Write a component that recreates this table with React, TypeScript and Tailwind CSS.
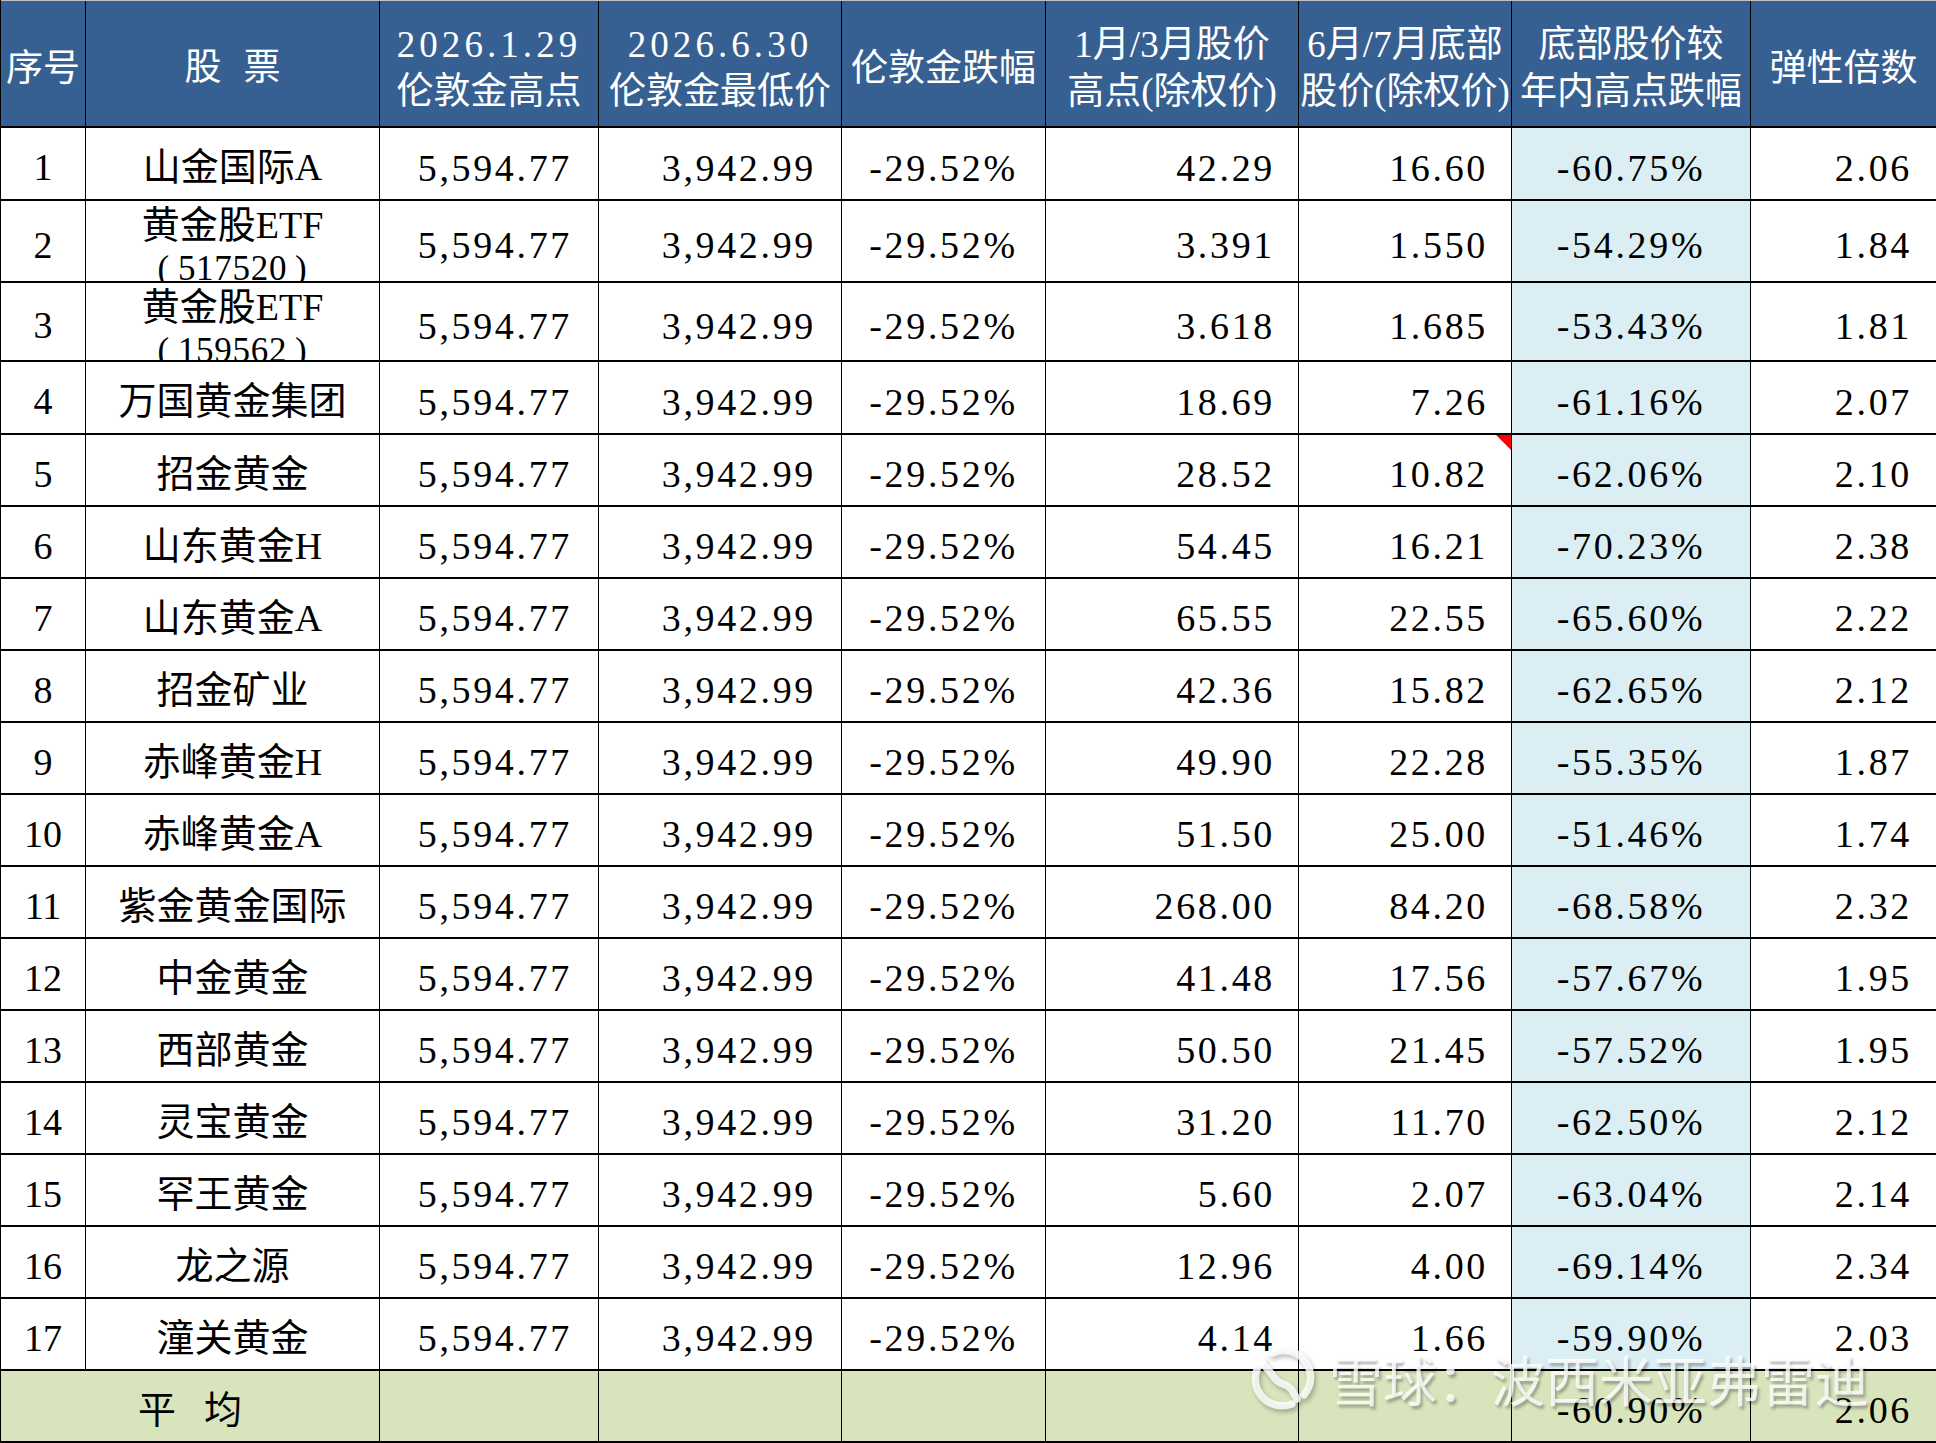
const ROW = "grid grid-cols-[85px_294px_219px_243px_204px_253px_213px_239px_186px] border-b-2 border-black";
const FONT = "font-['Liberation_Serif','Noto_Sans_CJK_SC',serif]";

type Stock = {
  no: number;
  name: string;
  code?: string;
  high: string;
  low: string;
  drop: string;
  ratio: string;
  h: string;
  flag?: boolean;
};

const stocks: Stock[] = [
  { no: 1, name: "山金国际A", high: "42.29", low: "16.60", drop: "-60.75%", ratio: "2.06", h: "h-[73px]" },
  { no: 2, name: "黄金股ETF", code: "517520", high: "3.391", low: "1.550", drop: "-54.29%", ratio: "1.84", h: "h-[82px]" },
  { no: 3, name: "黄金股ETF", code: "159562", high: "3.618", low: "1.685", drop: "-53.43%", ratio: "1.81", h: "h-[79px]" },
  { no: 4, name: "万国黄金集团", high: "18.69", low: "7.26", drop: "-61.16%", ratio: "2.07", h: "h-[73px]" },
  { no: 5, name: "招金黄金", high: "28.52", low: "10.82", drop: "-62.06%", ratio: "2.10", h: "h-[72px]", flag: true },
  { no: 6, name: "山东黄金H", high: "54.45", low: "16.21", drop: "-70.23%", ratio: "2.38", h: "h-[72px]" },
  { no: 7, name: "山东黄金A", high: "65.55", low: "22.55", drop: "-65.60%", ratio: "2.22", h: "h-[72px]" },
  { no: 8, name: "招金矿业", high: "42.36", low: "15.82", drop: "-62.65%", ratio: "2.12", h: "h-[72px]" },
  { no: 9, name: "赤峰黄金H", high: "49.90", low: "22.28", drop: "-55.35%", ratio: "1.87", h: "h-[72px]" },
  { no: 10, name: "赤峰黄金A", high: "51.50", low: "25.00", drop: "-51.46%", ratio: "1.74", h: "h-[72px]" },
  { no: 11, name: "紫金黄金国际", high: "268.00", low: "84.20", drop: "-68.58%", ratio: "2.32", h: "h-[72px]" },
  { no: 12, name: "中金黄金", high: "41.48", low: "17.56", drop: "-57.67%", ratio: "1.95", h: "h-[72px]" },
  { no: 13, name: "西部黄金", high: "50.50", low: "21.45", drop: "-57.52%", ratio: "1.95", h: "h-[72px]" },
  { no: 14, name: "灵宝黄金", high: "31.20", low: "11.70", drop: "-62.50%", ratio: "2.12", h: "h-[72px]" },
  { no: 15, name: "罕王黄金", high: "5.60", low: "2.07", drop: "-63.04%", ratio: "2.14", h: "h-[72px]" },
  { no: 16, name: "龙之源", high: "12.96", low: "4.00", drop: "-69.14%", ratio: "2.34", h: "h-[72px]" },
  { no: 17, name: "潼关黄金", high: "4.14", low: "1.66", drop: "-59.90%", ratio: "2.03", h: "h-[72px]" },
];

// header cell: an optional date line (spaced digits) above the label
const HeadCell = ({ date, label }: { date?: string; label: string }) => (
  <div className="flex flex-col items-center justify-center border-r border-black pt-[9px] text-[37px] leading-[47px] text-white whitespace-nowrap">
    {date && <span className="tracking-[0.11em]">{date}</span>}
    <span>{label}</span>
  </div>
);

const Logo = () => (
  <svg width="70" height="66" viewBox="0 0 70 66" className="drop-shadow-[2px_3px_2px_rgba(0,0,0,0.3)]">
    <g fill="none" stroke="rgba(255,255,255,0.82)" strokeLinecap="round" strokeWidth="7.5">
      <path d="M15 15 A27 27 0 0 0 45 58" />
      <path d="M25 7 A27 27 0 0 1 57 49" />
      <path d="M17 19 C26 28 28 36 36 38 C44 40 46 46 50 53" />
    </g>
  </svg>
);

export default function App() {
  return (
    <div className={`relative w-[1936px] h-[1443px] overflow-hidden bg-white text-black ${FONT}`}>
      <div className="border-l border-black">
        {/* header */}
        <div className={`${ROW} h-[128px] bg-[#376092] border-t border-t-[#bfbfbf]`}>
          <HeadCell label="序号" />
          <div className="flex items-center justify-center gap-[22px] border-r border-black pt-[9px] text-[37px] text-white">
            <span>股</span>
            <span>票</span>
          </div>
          <HeadCell date="2026.1.29" label="伦敦金高点" />
          <HeadCell date="2026.6.30" label="伦敦金最低价" />
          <HeadCell label="伦敦金跌幅" />
          <div className="flex flex-col items-center justify-center border-r border-black pt-[9px] text-[37px] leading-[47px] text-white whitespace-nowrap">
            <span>1月/3月股价</span>
            <span>高点(除权价)</span>
          </div>
          <div className="flex flex-col items-center justify-center border-r border-black pt-[9px] text-[37px] leading-[47px] text-white whitespace-nowrap">
            <span>6月/7月底部</span>
            <span>股价(除权价)</span>
          </div>
          <div className="flex flex-col items-center justify-center border-r border-black pt-[9px] text-[37px] leading-[47px] text-white whitespace-nowrap">
            <span>底部股价较</span>
            <span>年内高点跌幅</span>
          </div>
          <HeadCell label="弹性倍数" />
        </div>

        {stocks.map((s) => (
          <div key={s.no} className={`${ROW} ${s.h} text-[38px] leading-[38px]`}>
            <div className="flex items-center justify-center border-r border-black pt-[7px]">{s.no}</div>
            {s.code ? (
              <div className="flex flex-col items-center overflow-hidden border-r border-black">
                <span className="leading-[48px]">{s.name}</span>
                <span className="flex items-center text-[35px] leading-[40px] tracking-[0.02em]">
                  <span className="mr-[8px]">(</span>
                  {s.code}
                  <span className="ml-[8px]">)</span>
                </span>
              </div>
            ) : (
              <div className="flex items-center justify-center border-r border-black pt-[7px]">{s.name}</div>
            )}
            <div className="flex items-center justify-end border-r border-black pr-[26px] pt-[8px] tracking-[0.07em]">5,594.77</div>
            <div className="flex items-center justify-end border-r border-black pr-[25px] pt-[8px] tracking-[0.07em]">3,942.99</div>
            <div className="flex items-center justify-center border-r border-black pt-[8px] tracking-[0.07em]">-29.52%</div>
            <div className="flex items-center justify-end border-r border-black pr-[23px] pt-[8px] tracking-[0.07em]">{s.high}</div>
            <div className="relative flex items-center justify-end border-r border-black pr-[23px] pt-[8px] tracking-[0.07em]">
              {s.low}
              {s.flag && (
                <span className="absolute right-0 top-0 h-0 w-0 border-l-[15px] border-t-[15px] border-l-transparent border-t-[#ff0000]" />
              )}
            </div>
            <div className="flex items-center justify-center border-r border-black bg-[#daeef3] pt-[8px] tracking-[0.07em]">{s.drop}</div>
            <div className="flex items-center justify-end border-r border-black pr-[24px] pt-[8px] tracking-[0.07em]">{s.ratio}</div>
          </div>
        ))}

        {/* average row */}
        <div className={`${ROW} h-[72px] bg-[#d8e4bc] text-[38px] leading-[38px]`}>
          <div className="col-span-2 flex items-center justify-center gap-[28px] border-r border-black pt-[8px]">
            <span>平</span>
            <span>均</span>
          </div>
          <div className="border-r border-black" />
          <div className="border-r border-black" />
          <div className="border-r border-black" />
          <div className="border-r border-black" />
          <div className="border-r border-black" />
          <div className="flex items-center justify-center border-r border-black pt-[8px] tracking-[0.07em]">-60.90%</div>
          <div className="flex items-center justify-end border-r border-black pr-[24px] pt-[8px] tracking-[0.07em]">2.06</div>
        </div>
      </div>

      {/* watermark */}
      <div className="absolute left-[1247px] top-[1346px] flex items-center gap-[12px] font-['Noto_Sans_CJK_SC',sans-serif] text-[54px] leading-[66px] text-white/80 [text-shadow:2px_3px_3px_rgba(0,0,0,0.3)]">
        <Logo />
        <span>雪球：波西米亚弗雷迪</span>
      </div>
    </div>
  );
}
